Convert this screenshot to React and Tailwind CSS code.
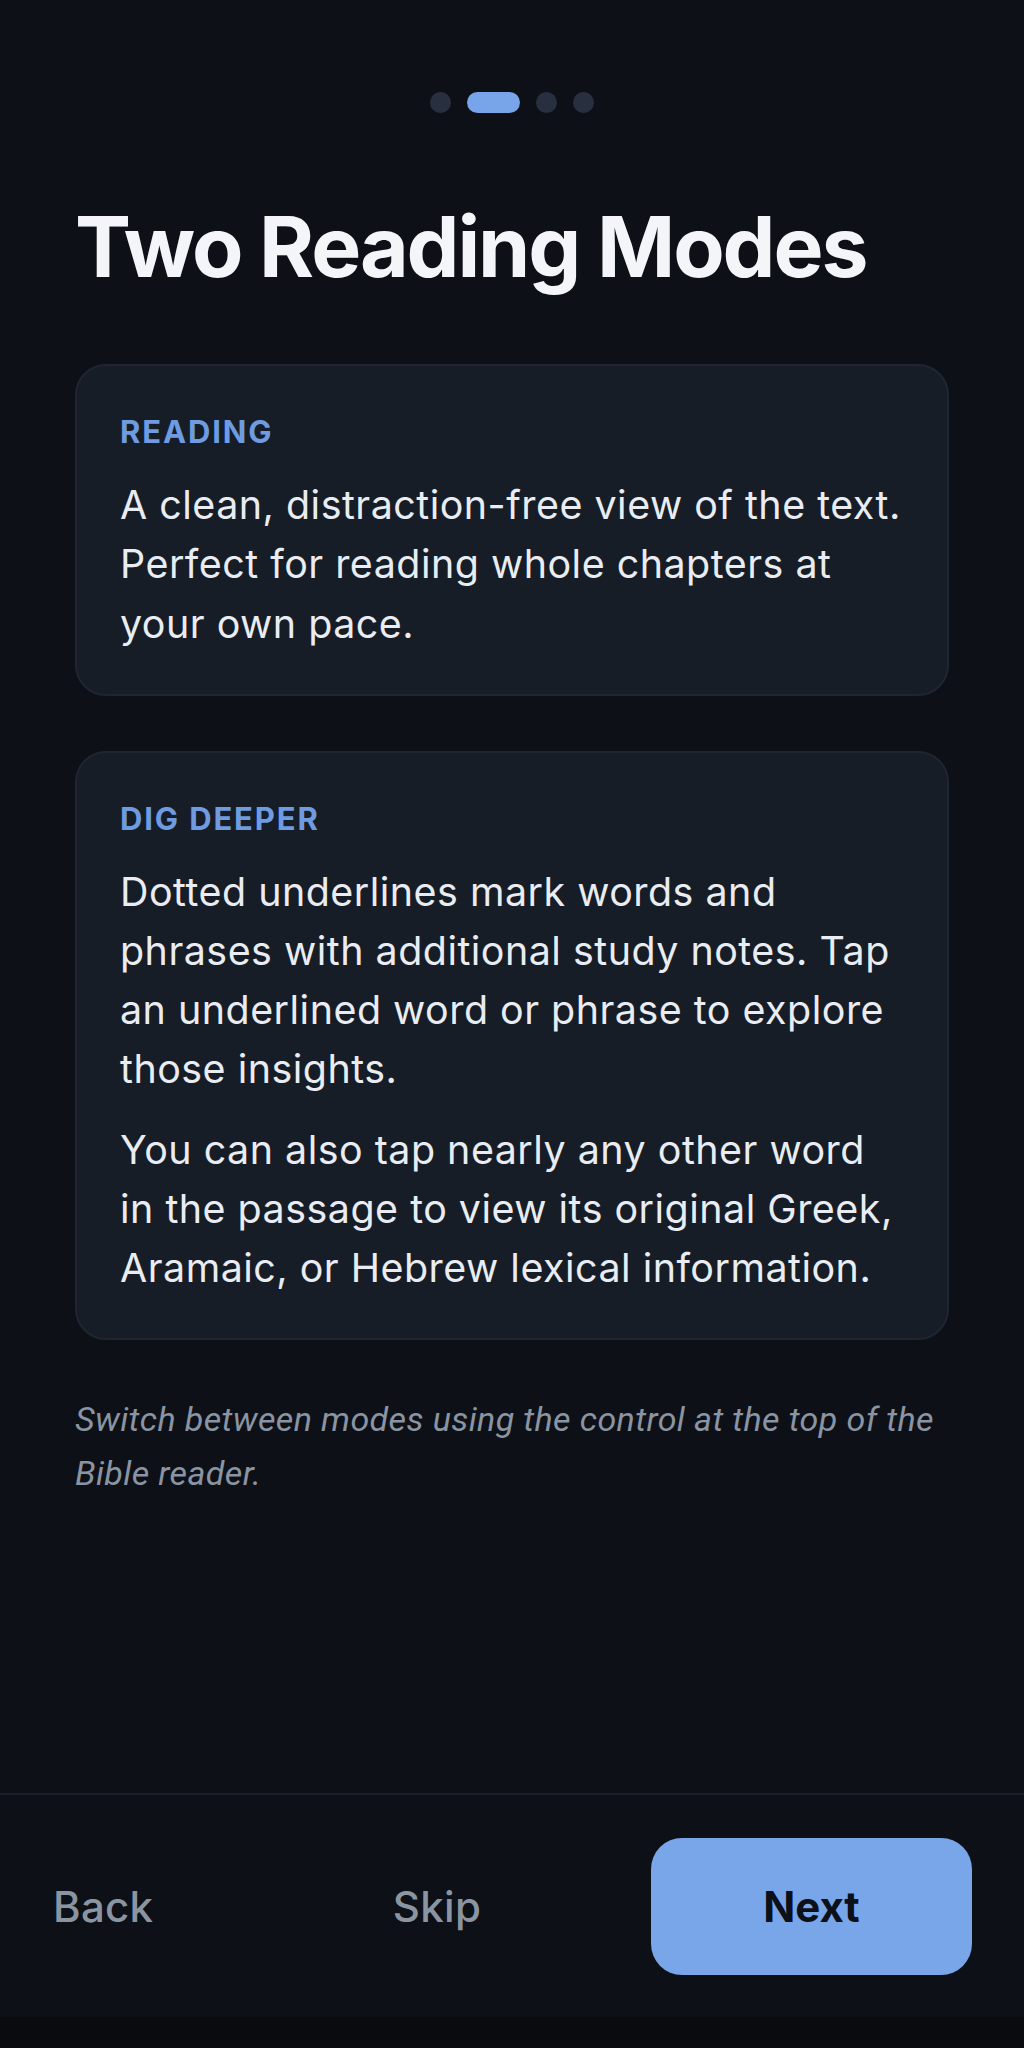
import React from "react";

export default function App() {
  const inter = { fontFamily: "Inter, 'Noto Sans', sans-serif" };
  return (
    <div className="w-[1024px] h-[2048px] bg-[#0a0b0f] flex flex-col" style={inter}>
      <div className="h-[2017px] bg-[#0d1117] flex flex-col">
        <div className="flex-1 flex flex-col px-[75px] pt-[92px]">
          <div className="flex items-center justify-center gap-[16px]">
            <div className="w-[21px] h-[21px] rounded-full bg-[#283040]" />
            <div className="w-[53px] h-[21px] rounded-full bg-[#78a5e9]" />
            <div className="w-[21px] h-[21px] rounded-full bg-[#283040]" />
            <div className="w-[21px] h-[21px] rounded-full bg-[#283040]" />
          </div>
          <h1 className="mt-[84px] text-[84px] leading-[1.2] font-bold text-[#f3f5f9] tracking-[-0.025em]">
            Two Reading Modes
          </h1>
          <div className="mt-[66px] flex flex-col">
            <div className="rounded-[31px] bg-[#161d26] border-2 border-[#1f2631] px-[43px] pt-[43px] pb-[40px]">
              <div className="text-[31px] leading-[1.5] font-bold tracking-[0.06em] text-[#6f9be0]">
                READING
              </div>
              <p className="mt-[21px] text-[39.4px] leading-[1.5] tracking-[0.5px] text-[#e9edf3]">
                A clean, distraction-free view of the text. Perfect for reading whole chapters at your own pace.
              </p>
            </div>
            <div className="mt-[55px] rounded-[31px] bg-[#161d26] border-2 border-[#1f2631] px-[43px] pt-[43px] pb-[40px]">
              <div className="text-[31px] leading-[1.5] font-bold tracking-[0.06em] text-[#6f9be0]">
                DIG DEEPER
              </div>
              <p className="mt-[21px] text-[39.4px] leading-[1.5] tracking-[0.5px] text-[#e9edf3]">
                Dotted underlines mark words and phrases with additional study notes. Tap an underlined word or phrase to explore those insights.
              </p>
              <p className="mt-[21px] text-[39.4px] leading-[1.5] tracking-[0.5px] text-[#e9edf3]">
                You can also tap nearly any other word in the passage to view its original Greek, Aramaic, or Hebrew lexical information.
              </p>
            </div>
            <p
              className="mt-[52px] text-[34px] leading-[1.6] italic tracking-[0.4px] text-[#8a94a2]"
              style={{ fontFamily: "Roboto, sans-serif" }}
            >
              Switch between modes using the control at the top of the Bible reader.
            </p>
          </div>
        </div>
        <div className="h-[224px] border-t-2 border-[#1a2029] flex items-center justify-between pl-[53px] pr-[52px]">
          <button className="w-[170px] text-left text-[42px] font-medium tracking-[0.3px] text-[#8b95a2]">Back</button>
          <button className="text-[42px] font-medium tracking-[0.3px] text-[#8b95a2]">Skip</button>
          <button className="w-[321px] h-[137px] rounded-[31px] bg-[#79a6e9] text-[42px] font-bold text-[#0b1019]">
            Next
          </button>
        </div>
      </div>
    </div>
  );
}
